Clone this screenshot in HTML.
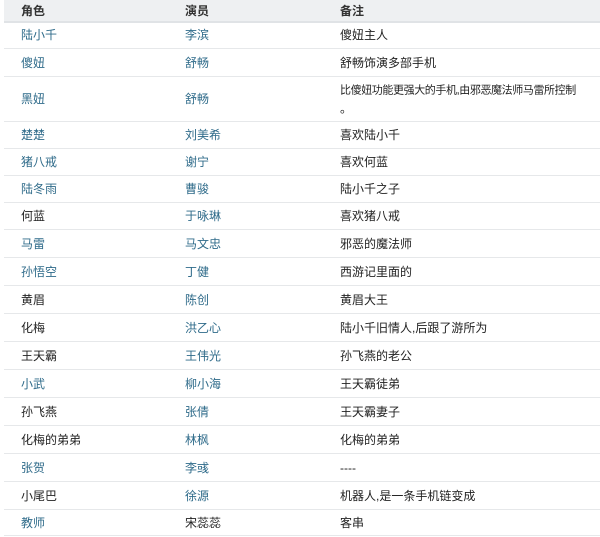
<!DOCTYPE html>
<html><head><meta charset="utf-8"><style>
body{margin:0;width:600px;height:537px;background:#fff;overflow:hidden;font-family:"Liberation Sans","Noto Sans CJK SC",sans-serif;font-size:12px;color:#222;position:relative}
.hd{position:absolute;left:4px;top:0;width:596px;height:21px;background:#eef0f2;border-bottom:2px solid #e0e3e6;font-weight:bold;color:#333}
.r{position:absolute;left:4px;width:596px;border-bottom:1px solid #e6e8ea}
.c{position:absolute;top:50%;transform:translateY(-50%);line-height:18px}
.c1{left:17px}.c2{left:181px}.c3{left:336px;width:264px;white-space:nowrap}
.l{color:#2f6b8a}
.sm{font-size:11px;letter-spacing:-0.4px}
</style></head><body>
<div class="hd"><span class="c c1">角色</span><span class="c c2">演员</span><span class="c c3">备注</span></div>
<div class="r" style="top:21px;height:27px"><span class="c c1 l">陆小千</span><span class="c c2 l">李滨</span><span class="c c3">傻妞主人</span></div>
<div class="r" style="top:49px;height:27px"><span class="c c1 l">傻妞</span><span class="c c2 l">舒畅</span><span class="c c3">舒畅饰演多部手机</span></div>
<div class="r" style="top:77px;height:44px"><span class="c c1 l">黑妞</span><span class="c c2 l">舒畅</span><span class="c c3"><span class="sm">比傻妞功能更强大的手机,由邪恶魔法师马雷所控制</span><br>。</span></div>
<div class="r" style="top:122px;height:26px"><span class="c c1 l">楚楚</span><span class="c c2 l">刘美希</span><span class="c c3">喜欢陆小千</span></div>
<div class="r" style="top:149px;height:26px"><span class="c c1 l">猪八戒</span><span class="c c2 l">谢宁</span><span class="c c3">喜欢何蓝</span></div>
<div class="r" style="top:176px;height:26px"><span class="c c1 l">陆冬雨</span><span class="c c2 l">曹骏</span><span class="c c3">陆小千之子</span></div>
<div class="r" style="top:203px;height:26px"><span class="c c1">何蓝</span><span class="c c2 l">于咏琳</span><span class="c c3">喜欢猪八戒</span></div>
<div class="r" style="top:230px;height:27px"><span class="c c1 l">马雷</span><span class="c c2 l">马文忠</span><span class="c c3">邪恶的魔法师</span></div>
<div class="r" style="top:258px;height:27px"><span class="c c1 l">孙悟空</span><span class="c c2 l">丁健</span><span class="c c3">西游记里面的</span></div>
<div class="r" style="top:286px;height:27px"><span class="c c1">黄眉</span><span class="c c2 l">陈创</span><span class="c c3">黄眉大王</span></div>
<div class="r" style="top:314px;height:27px"><span class="c c1">化梅</span><span class="c c2 l">洪乙心</span><span class="c c3">陆小千旧情人,后跟了游所为</span></div>
<div class="r" style="top:342px;height:27px"><span class="c c1">王天霸</span><span class="c c2 l">王伟光</span><span class="c c3">孙飞燕的老公</span></div>
<div class="r" style="top:370px;height:27px"><span class="c c1 l">小武</span><span class="c c2 l">柳小海</span><span class="c c3">王天霸徒弟</span></div>
<div class="r" style="top:398px;height:27px"><span class="c c1">孙飞燕</span><span class="c c2 l">张倩</span><span class="c c3">王天霸妻子</span></div>
<div class="r" style="top:426px;height:27px"><span class="c c1">化梅的弟弟</span><span class="c c2 l">林枫</span><span class="c c3">化梅的弟弟</span></div>
<div class="r" style="top:454px;height:27px"><span class="c c1 l">张贺</span><span class="c c2 l">李彧</span><span class="c c3">----</span></div>
<div class="r" style="top:482px;height:27px"><span class="c c1">小尾巴</span><span class="c c2 l">徐源</span><span class="c c3">机器人,是一条手机链变成</span></div>
<div class="r" style="top:510px;height:25px"><span class="c c1 l">教师</span><span class="c c2">宋蕊蕊</span><span class="c c3">客串</span></div>
</body></html>
